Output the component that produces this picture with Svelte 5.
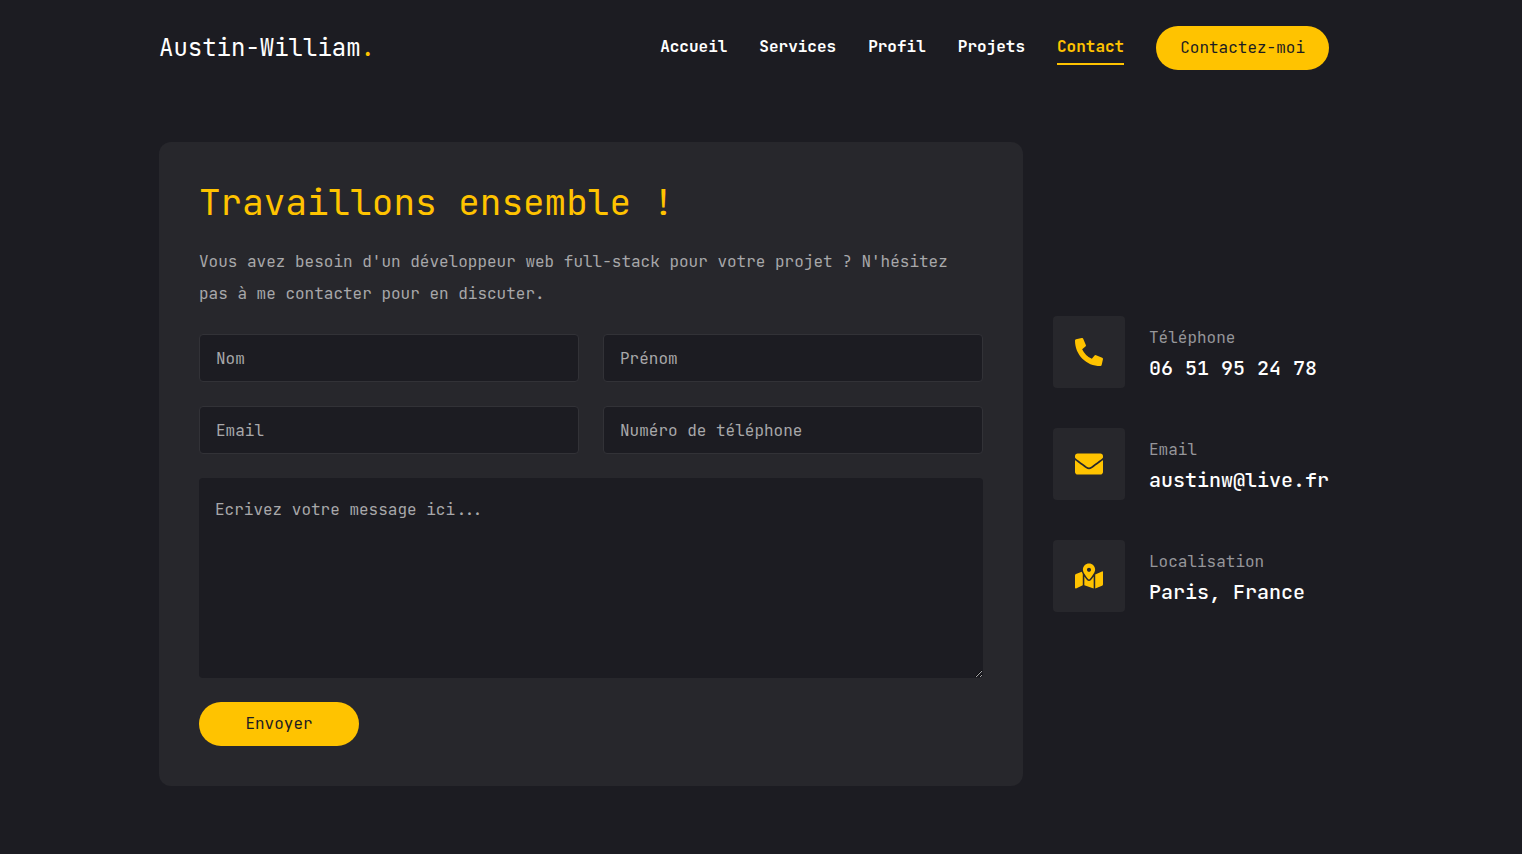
<script>
  const links = ['Accueil', 'Services', 'Profil', 'Projets', 'Contact'];
  const active = 'Contact';

  const fields = [
    { name: 'nom', type: 'text', label: 'Nom' },
    { name: 'prenom', type: 'text', label: 'Prénom' },
    { name: 'email', type: 'email', label: 'Email' },
    { name: 'telephone', type: 'tel', label: 'Numéro de téléphone' }
  ];

  const details = [
    {
      label: 'Téléphone',
      value: '06 51 95 24 78',
      box: '0 0 512 512',
      icon: 'M497.39 361.8l-112-48a24 24 0 0 0-28 6.9l-49.6 60.6A370.66 370.66 0 0 1 130.6 204.11l60.6-49.6a23.94 23.94 0 0 0 6.9-28l-48-112A24.16 24.16 0 0 0 122.6.61l-104 24A24 24 0 0 0 0 48c0 256.5 207.9 464 464 464a24 24 0 0 0 23.4-18.6l24-104a24.29 24.29 0 0 0-14.01-27.6z'
    },
    {
      label: 'Email',
      value: 'austinw@live.fr',
      box: '0 0 512 512',
      icon: 'M502.3 190.8c3.9-3.1 9.7-.2 9.7 4.7V400c0 26.5-21.5 48-48 48H48c-26.5 0-48-21.5-48-48V195.6c0-5 5.7-7.8 9.7-4.7 22.4 17.4 52.1 39.5 154.1 113.6 21.1 15.4 56.7 47.8 92.2 47.6 35.7.3 72-32.8 92.3-47.6 102-74.1 131.6-96.3 154-113.7zM256 320c23.2.4 56.6-29.2 73.4-41.4 132.7-96.3 142.8-104.7 173.4-128.7 5.8-4.5 9.2-11.5 9.2-18.9v-19c0-26.5-21.5-48-48-48H48c-26.5 0-48 21.5-48 48v19c0 7.4 3.4 14.3 9.2 18.9 30.6 23.9 40.7 32.4 173.4 128.7 16.8 12.2 50.2 41.8 73.4 41.4z'
    },
    {
      label: 'Localisation',
      value: 'Paris, France',
      box: '0 0 576 512',
      icon: 'M288 0c-69.59 0-126 56.41-126 126 0 56.26 82.35 158.8 113.9 196.02 6.39 7.54 17.82 7.54 24.2 0C331.65 284.8 414 182.26 414 126 414 56.41 357.59 0 288 0zm0 168c-23.2 0-42-18.8-42-42s18.8-42 42-42 42 18.8 42 42-18.8 42-42 42zM20.12 215.95A32.006 32.006 0 0 0 0 245.66v250.32c0 11.32 11.43 19.06 21.94 14.86L160 448V214.92c-8.84-15.98-16.07-31.54-21.25-46.42L20.12 215.95zM288 359.67c-14.07 0-27.38-6.18-36.51-16.96-19.66-23.2-40.57-49.62-59.49-76.72v182l192 64V266c-18.92 27.09-39.82 53.52-59.49 76.72-9.13 10.77-22.44 16.95-36.51 16.95zm266.06-198.51L416 224v288l139.88-55.95A31.996 31.996 0 0 0 576 426.34V176.02c0-11.32-11.43-19.06-21.94-14.86z'
    }
  ];
</script>

<div class="page">
  <header>
    <a class="logo" href="#top">Austin-William<span>.</span></a>
    <nav>
      {#each links as link}
        <a href="#{link}" class:active={link === active}>{link}</a>
      {/each}
      <button class="pill">Contactez-moi</button>
    </nav>
  </header>

  <main>
    <form class="card" onsubmit={(e) => e.preventDefault()}>
      <h1>Travaillons ensemble !</h1>
      <p>Vous avez besoin d'un développeur web full-stack pour votre projet ? N'hésitez pas à me contacter pour en discuter.</p>
      <div class="fields">
        {#each fields as field}
          <input type={field.type} name={field.name} placeholder={field.label} />
        {/each}
      </div>
      <textarea name="message" placeholder="Ecrivez votre message ici..."></textarea>
      <button class="pill send" type="submit">Envoyer</button>
    </form>

    <ul class="details">
      {#each details as item}
        <li>
          <div class="icon">
            <svg viewBox={item.box} aria-hidden="true"><path d={item.icon} /></svg>
          </div>
          <div class="info">
            <span class="label">{item.label}</span>
            <span class="value">{item.value}</span>
          </div>
        </li>
      {/each}
    </ul>
  </main>
</div>

<style>
  :global(body) {
    background: #1c1c22;
  }

  .page,
  .page * {
    box-sizing: border-box;
  }

  .page {
    min-height: 854px;
    padding: 0 193px 0 159px;
    background: #1c1c22;
    color: #fff;
    font-family: 'JetBrains Mono', 'DejaVu Sans Mono', monospace;
    font-size: 16px;
  }

  header {
    display: flex;
    align-items: center;
    justify-content: space-between;
    height: 96px;
  }

  a {
    color: inherit;
    text-decoration: none;
  }

  .logo {
    font-size: 24px;
    line-height: 32px;
  }

  .logo span {
    color: #ffc300;
  }

  nav {
    display: flex;
    align-items: center;
    gap: 32px;
  }

  nav a {
    font-weight: 700;
    line-height: 32px;
    border-bottom: 2px solid transparent;
  }

  nav a.active {
    color: #ffc300;
    border-color: #ffc300;
  }

  .pill {
    height: 44px;
    padding: 0 24px 2px;
    border: 0;
    border-radius: 22px;
    background: #ffc300;
    color: #1c1c22;
    font: inherit;
  }

  main {
    display: flex;
    align-items: center;
    gap: 30px;
    padding-top: 46px;
  }

  .card {
    width: 864px;
    height: 644px;
    padding: 40px;
    border-radius: 12px;
    background: #27272c;
    display: flex;
    flex-direction: column;
    align-items: flex-start;
    gap: 24px;
  }

  h1 {
    margin: 0;
    color: #ffc300;
    font-size: 36px;
    font-weight: 400;
    line-height: 40px;
  }

  p {
    margin: 0;
    color: #a8a8aa;
    line-height: 32px;
  }

  .fields {
    width: 100%;
    display: grid;
    grid-template-columns: 1fr 1fr;
    gap: 24px;
  }

  input,
  textarea {
    width: 100%;
    border-radius: 4px;
    background: #1c1c22;
    color: #fff;
    font: inherit;
    outline: none;
  }

  input {
    height: 48px;
    padding: 0 16px;
    border: 1px solid #323237;
  }

  textarea {
    display: block;
    flex: none;
    height: 200px;
    padding: 16px;
    border: 0;
    line-height: 32px;
  }

  input::placeholder,
  textarea::placeholder {
    color: #a8a8aa;
    opacity: 1;
  }

  .send {
    width: 160px;
  }

  .details {
    margin: 0;
    padding: 0;
    list-style: none;
    display: flex;
    flex-direction: column;
    gap: 40px;
  }

  li {
    display: flex;
    align-items: center;
    gap: 24px;
  }

  .icon {
    width: 72px;
    height: 72px;
    border-radius: 4px;
    background: #27272c;
    display: grid;
    place-items: center;
  }

  svg {
    width: 28px;
    height: 28px;
    fill: #ffc300;
  }

  .info {
    display: flex;
    flex-direction: column;
  }

  .label {
    color: #96969a;
    line-height: 32px;
  }

  .value {
    font-size: 20px;
    font-weight: 500;
    line-height: 28px;
    white-space: nowrap;
  }
</style>
